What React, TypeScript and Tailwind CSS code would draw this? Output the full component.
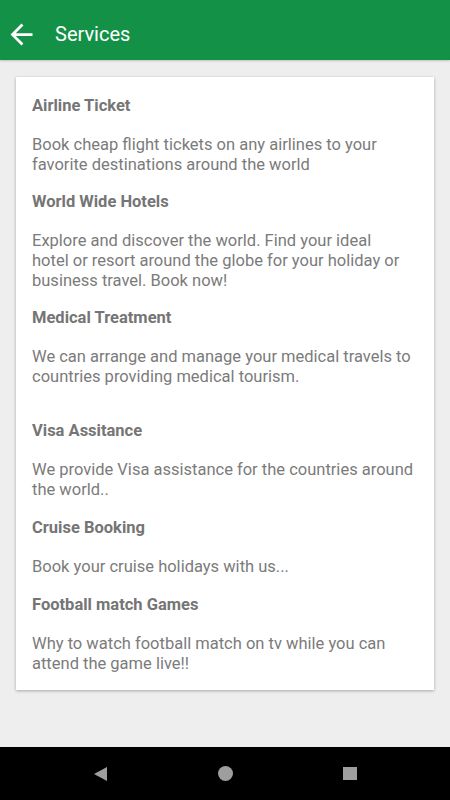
import React from "react";

const services = [
  {
    title: "Airline Ticket",
    body: "Book cheap flight tickets on any airlines to your favorite destinations around the world",
    gap: "",
  },
  {
    title: "World Wide Hotels",
    body: "Explore and discover the world. Find your ideal\nhotel or resort around the globe for your holiday or business travel. Book now!",
    gap: "mt-[17px]",
  },
  {
    title: "Medical Treatment",
    body: "We can arrange and manage your medical travels to countries providing medical tourism.",
    gap: "mt-[17px]",
  },
  {
    title: "Visa Assitance",
    body: "We provide Visa assistance for the countries around the world..",
    gap: "mt-[34px]",
  },
  {
    title: "Cruise Booking",
    body: "Book your cruise holidays with us...",
    gap: "mt-[18px]",
  },
  {
    title: "Football match Games",
    body: "Why to watch football match on tv while you can attend the game live!!",
    gap: "mt-[18px]",
  },
];

export default function App() {
  return (
    <div className="h-[800px] w-[450px] flex flex-col bg-[#eeeeee] font-['Roboto',sans-serif]">
      {/* Toolbar */}
      <header className="h-[60px] bg-[#139247] flex items-center pt-2 shadow-[0_1px_2px_rgba(0,0,0,0.2)] relative z-10">
        <svg viewBox="0 0 24 24" className="w-[33px] h-[33px] ml-[5px] fill-white">
          <path d="M20 11H7.83l5.59-5.59L12 4l-8 8 8 8 1.41-1.41L7.83 13H20v-2z" />
        </svg>
        <h1 className="ml-[17px] text-white text-[20px] font-normal leading-none">Services</h1>
      </header>

      {/* Content */}
      <main className="flex-1 px-4 pt-[17px]">
        <div className="bg-white shadow-[0_1px_3px_rgba(0,0,0,0.3)] pl-4 pr-3 pt-[19px] pb-[16px]">
          {services.map((s) => (
            <div key={s.title} className={s.gap}>
              <h2 className="text-[16.5px] leading-[20px] font-bold text-[#757575]">{s.title}</h2>
              <p className="mt-[19px] text-[16.5px] leading-[20px] text-[#7b7b7b] whitespace-pre-line">{s.body}</p>
            </div>
          ))}
        </div>
      </main>

      {/* Navigation bar */}
      <nav className="h-[53px] bg-black flex items-center justify-center">
        <div className="w-[125px] flex items-center justify-center">
          <svg viewBox="0 0 13 14" className="w-[13px] h-[14px] fill-[#9e9e9e]">
            <path d="M13 0V14L0 7Z" />
          </svg>
        </div>
        <div className="w-[125px] flex items-center justify-center">
          <div className="w-[15px] h-[15px] rounded-full bg-[#9e9e9e]" />
        </div>
        <div className="w-[125px] flex items-center justify-center">
          <div className="w-[14px] h-[13px] bg-[#9e9e9e]" />
        </div>
      </nav>
    </div>
  );
}
